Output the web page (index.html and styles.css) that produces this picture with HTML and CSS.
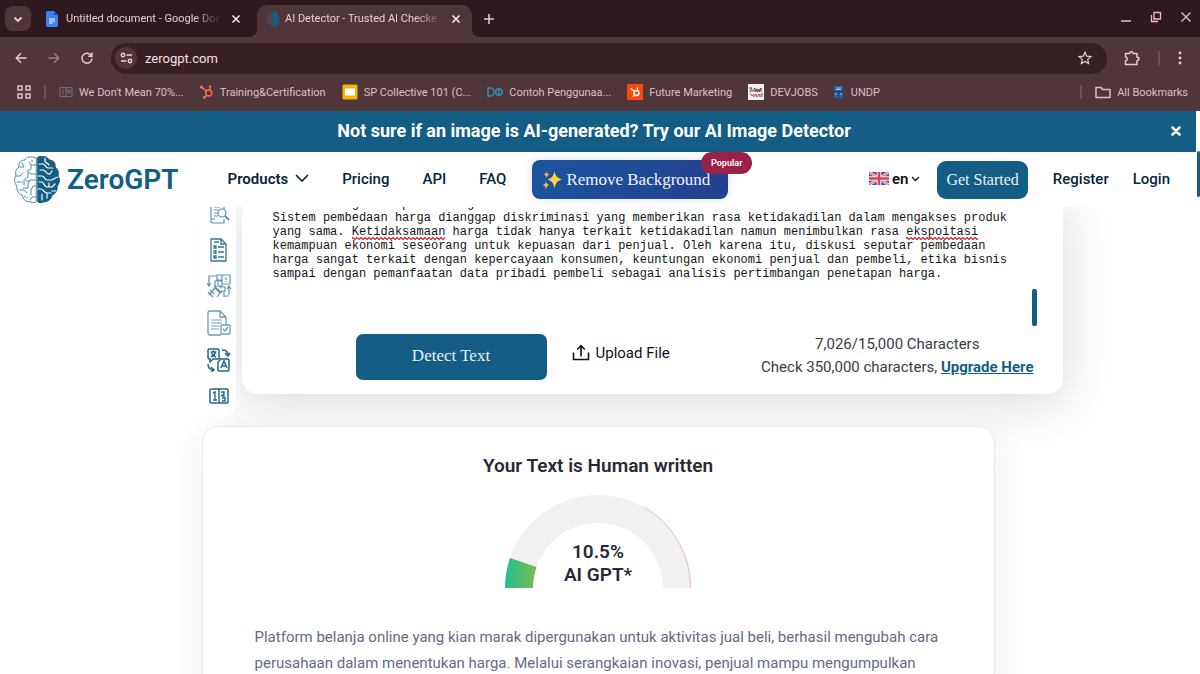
FILE: index.html
```html
<!DOCTYPE html>
<html lang="en">
<head>
<meta charset="utf-8">
<meta name="viewport" content="width=device-width, initial-scale=1">
<title>AI Detector - Trusted AI Checker</title>
<link rel="stylesheet" href="styles.css">
</head>
<body>
<div class="browser">
  <div class="tabstrip">
    <button class="tab-search" aria-label="Search tabs"><svg width="10" height="10" viewBox="0 0 10 10"><path d="M1.500 3.500 5 7l3.500-3.500" fill="none" stroke="currentColor" stroke-width="1.800"/></svg></button>
    <div class="tab">
      <svg width="12" height="16" viewBox="0 0 12 16"><path d="M1.500 0H8l4 4v10.500a1.500 1.500 0 0 1-1.500 1.500h-9A1.500 1.500 0 0 1 0 14.500v-13A1.500 1.500 0 0 1 1.500 0Z" fill="#3b82f6"/><path d="M8 0v4h4Z" fill="#1552c4"/><path d="M3 8h6M3 10h6M3 12h4" stroke="#fff" stroke-width="1"/></svg>
      <span class="tab-title">Untitled document - Google Doc</span>
      <button class="tab-close" aria-label="Close tab"><svg width="10" height="10" viewBox="0 0 10 10"><path d="m1.500 1.500 7 7m0-7-7 7" stroke="currentColor" stroke-width="1.500"/></svg></button>
    </div>
    <div class="tab tab-active">
      <svg width="13" height="16" viewBox="0 0 13 16"><path d="M6 1a5.500 7 0 0 0 0 14" fill="#4e4254"/><path d="M6.500 0a6.500 8 0 0 1 0 16Z" fill="#145d84"/></svg>
      <span class="tab-title">AI Detector - Trusted AI Checke</span>
      <button class="tab-close" aria-label="Close tab"><svg width="10" height="10" viewBox="0 0 10 10"><path d="m1.500 1.500 7 7m0-7-7 7" stroke="currentColor" stroke-width="1.700"/></svg></button>
    </div>
    <button class="icon-btn new-tab" aria-label="New tab"><svg width="12" height="12" viewBox="0 0 12 12"><path d="M6 1v10M1 6h10" stroke="currentColor" stroke-width="1.500"/></svg></button>
    <div class="window-controls">
      <button class="icon-btn" aria-label="Minimize"><svg width="12" height="12" viewBox="0 0 12 12"><path d="M1 10h10" stroke="currentColor" stroke-width="1.500"/></svg></button>
      <button class="icon-btn" aria-label="Restore"><svg width="12" height="12" viewBox="0 0 12 12" fill="none" stroke="currentColor" stroke-width="1.300"><path d="M4 1.500h6.500V8H4ZM1.500 4v6.500H8"/></svg></button>
      <button class="icon-btn" aria-label="Close"><svg width="12" height="12" viewBox="0 0 12 12"><path d="m1.500 1.500 9 9m0-9-9 9" stroke="currentColor" stroke-width="1.300"/></svg></button>
    </div>
  </div>
  <div class="toolbar">
    <div class="history">
      <button class="icon-btn" aria-label="Back"><svg width="12" height="12" viewBox="0 0 12 12" fill="none" stroke="currentColor" stroke-width="1.400"><path d="M11.500 6H1.500M6 1.200 1.200 6 6 10.800"/></svg></button>
      <button class="icon-btn dim" aria-label="Forward"><svg width="12" height="12" viewBox="0 0 12 12" fill="none" stroke="currentColor" stroke-width="1.400"><path d="M.5 6h10M6 1.200 10.800 6 6 10.800"/></svg></button>
      <button class="icon-btn" aria-label="Reload"><svg width="12" height="12" viewBox="0 0 12 12" fill="none" stroke="currentColor" stroke-width="1.500"><path d="M10.300 3.600A5 5 0 1 0 11 6.500M10.900.5v3.700H7.200"/></svg></button>
    </div>
    <div class="omnibox">
      <button class="site-info" aria-label="View site information"><svg width="13" height="12" viewBox="0 0 13 12" fill="none" stroke="currentColor" stroke-width="1.400"><circle cx="3" cy="3" r="1.700"/><path d="M6.500 3H12M1 9h5.500"/><circle cx="10" cy="9" r="1.700"/></svg></button>
      <input class="url" type="text" value="zerogpt.com" aria-label="Address">
      <button class="icon-btn" aria-label="Bookmark this page"><svg width="14" height="14" viewBox="0 0 14 14"><path d="m7 1.300 1.700 3.900 4.300.4-3.300 2.800 1 4.200L7 10.400l-3.700 2.200 1-4.200L1 5.600l4.300-.4Z" fill="none" stroke="currentColor" stroke-width="1.200"/></svg></button>
    </div>
    <div class="tools">
      <button class="icon-btn" aria-label="Extensions"><svg width="16" height="16" viewBox="0 0 16 16"><path d="M1.500 3.500h4.300c0-2.300 3.200-2.300 3.200 0h4v3.700c2.600 0 2.600 3.200 0 3.200v4H1.500v-3.700c2.300-.3 2.300-3.300 0-3.600Z" fill="none" stroke="currentColor" stroke-width="1.500" stroke-linejoin="round"/></svg></button>
      <span class="divider"></span>
      <button class="icon-btn" aria-label="Menu"><svg width="4" height="14" viewBox="0 0 4 14" fill="currentColor"><circle cx="2" cy="2" r="1.400"/><circle cx="2" cy="7" r="1.400"/><circle cx="2" cy="12" r="1.400"/></svg></button>
    </div>
  </div>
  <nav class="bookmarks" aria-label="Bookmarks">
    <button class="icon-btn apps" aria-label="Apps"><svg width="14" height="14" viewBox="0 0 14 14" fill="none" stroke="currentColor" stroke-width="1.500"><path d="M1 1h4v4H1ZM9 1h4v4H9ZM1 9h4v4H1ZM9 9h4v4H9Z"/></svg></button>
    <span class="divider"></span>
    <a href="#"><svg width="14" height="12" viewBox="0 0 14 12" fill="none" stroke="#7b6670" stroke-width="1.200"><path d="M1 1.500h5l1 .7 1-.7h5v9H8l-1 .7-1-.7H1ZM7 2v9M3 4h2M3 6h2M3 8h2M9 4h2v3H9Z"/></svg>We Don't Mean 70%...</a>
    <a href="#"><svg width="14" height="14" viewBox="0 0 14 14" fill="none" stroke="#f5704f" stroke-width="1.500"><circle cx="8.700" cy="8" r="3"/><path d="M10 5V1.500M6.400 6 1.500 2.200M6.500 10.200 4.500 12.500"/><g fill="#f5704f"><circle cx="10" cy="1.500" r=".6"/><circle cx="1.500" cy="2" r=".8"/><circle cx="4.200" cy="12.500" r=".6"/></g></svg>Training&amp;Certification</a>
    <a href="#"><svg width="16" height="16" viewBox="0 0 16 16"><rect x=".5" y=".5" width="15" height="15" rx="1.500" fill="#f4b400"/><path d="M3 4.500h10v7H3Z" fill="#fff"/></svg>SP Collective 101 (C...</a>
    <a href="#"><svg width="16" height="10" viewBox="0 0 16 10" fill="none" stroke="#348ca5" stroke-width="1.500"><path d="M1 1h2.500a3.500 4 0 0 1 0 8H1Z"/><circle cx="11.800" cy="5" r="3.200"/><path d="M11.800 1v8"/></svg>Contoh Penggunaa...</a>
    <a href="#"><svg width="16" height="16" viewBox="0 0 16 16"><path d="M0 0h16v16H0Z" fill="#fb470e"/><g fill="none" stroke="#fff" stroke-width="1.400"><circle cx="9.500" cy="9" r="2.500"/><path d="M10.500 6.500v-3M7.500 7.500l-4-3.200M7.500 11 6 12.800"/></g></svg>Future Marketing</a>
    <a href="#"><svg width="16" height="16" viewBox="0 0 16 16"><path d="M0 0h16v16H0Z" fill="#f4eeee"/><path d="M1 4h3l-2 3h3l2-3v4l2-3v3l2-3v3l2-4v4" fill="none" stroke="#49494a"/><path d="m2 9 2 3 2-2v3l2-3 1 3 2-3 1 3 2-4v4" fill="none" stroke="#c65259"/></svg>DEVJOBS</a>
    <a href="#"><svg width="11" height="12" viewBox="0 0 11 12"><path d="M0 0h9v5H0ZM0 6h4v6H0ZM5 6h4v6H5Z" fill="#1764ad"/><path d="M2 2h5M2 3.500h5M1 8h2M6 8h2" stroke="#9bc5e8"/></svg>UNDP</a>
    <div class="all-bookmarks"><span class="divider"></span><a href="#"><svg width="16" height="13" viewBox="0 0 16 13"><path d="M1 1.500h5l1.500 2H15v8H1Z" fill="none" stroke="currentColor" stroke-width="1.500" stroke-linejoin="round"/></svg>All Bookmarks</a></div>
  </nav>
</div>
<div class="viewport">
  <div class="site">
    <div class="promo">
      <a href="#">Not sure if an image is AI-generated? Try our AI Image Detector</a>
      <button class="promo-close" aria-label="Dismiss"><svg width="10" height="10" viewBox="0 0 10 10"><path d="m1.500 1.500 7 7m0-7-7 7" stroke="#fff" stroke-width="2.500" stroke-linecap="round"/></svg></button>
    </div>
    <header class="header">
      <a class="brand" href="#">
        <svg width="46" height="48" viewBox="0 0 46 48" fill="none" stroke-linecap="round" stroke-linejoin="round">
          <path d="M22 2C17-.5 12 1 11 4 7 4 4 7 5 11c-3 2-4 5-3 8-2 4-2 8 1 11-1 5 2 8 5 9 1 5 5 7 9 7 2 1 4 1 5 0Z" stroke="#4787a5"/>
          <path d="M22 9h-5l-2-3M17 9v4l-4 2M8 7l2 4H6M22 18h-5l-3-2M14 16v5l-4 3v5M2 20h4l3-3M3 26h5M22 24h-6l-2 4v4h-5M22 30h-3l-2 4v5M5 34h5l3 3M22 41h-4l-2 3M10 40l3 2M12 25h4M18 4v2" stroke="#578fab" stroke-width="1"/>
          <path d="M24 1c5-2 10 0 11 3 4 0 7 3 6 7 3 2 4 5 3 8 2 4 2 8-1 11 1 5-2 8-5 9-1 5-5 7-9 7-2 1-4 1-5 0Z" fill="#145d84" stroke="#145d84"/>
          <path d="M25 8h4c3 0 2 4 5 4h5M31 2v3c0 2 3 2 4 4M26 14h3c3 0 3 5 7 4l2-3M24 20h4c3 0 2 4 5 4h4c3 0 4-3 7-3M25 26h3c2 0 2 5 5 5h5l3-3M24 33h3c2 0 3 4 6 4h4M33 37v5M28 38v6M35 27v4M42 35h-4" stroke="#fff" stroke-width="1.200"/>
        </svg>
        <span>ZeroGPT</span>
      </a>
      <nav class="menu" aria-label="Main">
        <button class="menu-drop">Products <svg width="14" height="9" viewBox="0 0 14 9"><path d="m1.500 1.500 5.500 5.500 5.500-5.500" fill="none" stroke="currentColor" stroke-width="1.700" stroke-linecap="round"/></svg></button>
        <a href="#">Pricing</a>
        <a href="#">API</a>
        <a href="#">FAQ</a>
      </nav>
      <a class="remove-bg" href="#">
        <svg width="20" height="20" viewBox="0 0 20 20"><path d="M12.500 1c.8 4.500 2.300 6.800 7.300 8.500-5 1.700-6.500 4.200-7.300 9.300-.8-5.100-2.300-7.600-6.800-9.300C10.200 7.800 11.700 5.500 12.500 1Z" fill="#fdd03e"/><path d="M4.500 1c.4 2.400 1.200 3.200 3.200 3.600-2 .5-2.800 1.300-3.200 3.600-.4-2.300-1.200-3.100-3-3.600 1.800-.4 2.600-1.200 3-3.600ZM4 11c.5 2.800 1.300 3.500 3.500 4-2.200.5-3 1.700-3.500 4.500C3.500 16.700 2.700 15.500.5 15c2.200-.5 3-1.200 3.500-4Z" fill="#f3b445"/></svg>
        Remove Background<span class="popular">Popular</span>
      </a>
      <div class="account">
        <button class="lang"><svg width="20" height="13" viewBox="0 0 20 13"><path d="M0 0h20v13H0Z" fill="#465b9e"/><path d="m0 0 20 13M20 0 0 13" stroke="#f5e9ef" stroke-width="2.600"/><path d="m0 0 20 13M20 0 0 13" stroke="#e24e62" stroke-width="1"/><path d="M10 0v13M0 6.500h20" stroke="#f5e9ef" stroke-width="4.500"/><path d="M10 0v13M0 6.500h20" stroke="#df4058" stroke-width="2.500"/></svg><span>en</span><svg width="9" height="6" viewBox="0 0 9 6"><path d="m1 1 3.500 3.500L8 1" fill="none" stroke="currentColor" stroke-width="1.300"/></svg></button>
        <a class="get-started" href="#">Get Started</a>
        <a class="account-link" href="#">Register</a>
        <a class="account-link" href="#">Login</a>
      </div>
    </header>
    <main class="main">
      <section class="workspace">
        <nav class="rail" aria-label="Tools">
          <a href="#" aria-label="Plagiarism checker"><svg width="24" height="24" viewBox="0 0 24 24" fill="none" stroke="#5e91ad" stroke-width="1.200"><path d="M4 1h13v6M17 17v4H6c-3 0-3-4 0-4h2M4 1v16M7 5h6M7 8h4M7 11h4M7 14h4"/><circle cx="15" cy="11" r="4"/><path d="m18 14 4 4" stroke-width="2"/></svg></a>
          <a href="#" aria-label="Summarizer"><svg width="24" height="24" viewBox="0 0 24 24" fill="none" stroke="#347798" stroke-width="1.300"><path d="M4 1h10l5 5v17H4ZM14 1v5h5M7 8h2v2H7ZM7 13h2v2H7ZM7 18h2v2H7ZM11 9h6M11 14h6M11 19h6M7 4h5"/></svg></a>
          <a href="#" aria-label="Paraphraser"><svg width="24" height="24" viewBox="0 0 24 24" fill="none" stroke="#5f93af" stroke-width="1.200"><path d="M10 1h5v5h-5ZM15 1h8v9h-8ZM19 3v3M19 7v1M9 2H2v9M0 9l2 3 2-3M8 7h7v5H8ZM11 8v3M22 21V12M20 15l2-3 2 3M17 22h5M7 12l8 7M2 21l6-7 5 5-3 4M1 18l5 5M12 13h6v4h-4M17 17v6M3 16l4 4"/></svg></a>
          <a href="#" aria-label="Grammar checker"><svg width="24" height="26" viewBox="0 0 24 26" fill="none" stroke="#6e9ab6" stroke-width="1.300"><path d="M14 25H3c-1.500 0-2-.5-2-2V3c0-1.500.5-2 2-2h10l6 6v8M13 1v6h6"/><path d="M4 10h11M4 13h11M4 16h9M4 19h8" stroke="#a9bfce"/><rect x="14" y="15" width="9" height="9" rx="1"/><path d="m16 19 2 2 3-4"/></svg></a>
          <a href="#" aria-label="Translator"><svg width="24" height="24" viewBox="0 0 24 24" fill="none" stroke="#22678b" stroke-width="1.500"><path d="M2 1h9l1 1v8l-1 1H6l-3 3v-3H2l-1-1V2ZM13 11h8l1 1v10l-1 1h-9l-1-1v-8l2-2ZM3.500 4h6M6.500 2.500V4M8.500 4c-.5 2-2.500 4-4.500 5M4.500 5c1 2 2.500 3 4.500 4M14 20l3-7 3 7M15 18h4M15 2c4 0 6 2 6 5M18 5l3 3 2-3M1 16c0 4 2 6 6 6M4 19l3 3-3 2"/></svg></a>
          <a href="#" aria-label="Word counter"><svg width="24" height="24" viewBox="-2 -3 24 24" fill="none" stroke="#22678b" stroke-width="1.500"><rect x="1" y="2" width="18" height="14" rx="1"/><path d="M10 2v14M4 6l2-1v8M4 13h4M12 5h3v2l-3 2M16 9h-3M13 11h3v3h-3" stroke-width="1.400"/></svg></a>
        </nav>
        <form class="editor">
          <div class="editor-body">
            <textarea class="editor-text" rows="8" wrap="off" spellcheck="false" aria-label="Text to check">di atas uang kelompok dukung
Sistem pembedaan harga dianggap diskriminasi yang memberikan rasa ketidakadilan dalam mengakses produk
yang sama. Ketidaksamaan harga tidak hanya terkait ketidakadilan namun menimbulkan rasa ekspoitasi
kemampuan ekonomi seseorang untuk kepuasan dari penjual. Oleh karena itu, diskusi seputar pembedaan
harga sangat terkait dengan kepercayaan konsumen, keuntungan ekonomi penjual dan pembeli, etika bisnis
sampai dengan pemanfaatan data pribadi pembeli sebagai analisis pertimbangan penetapan harga.</textarea>
            <span class="squiggle squiggle-first"></span>
            <span class="squiggle squiggle-second"></span>
            <span class="editor-thumb"></span>
          </div>
          <div class="editor-actions">
            <button class="detect" type="button">Detect Text</button>
            <button class="upload" type="button"><svg width="18" height="18" viewBox="0 0 18 18" fill="none" stroke="currentColor" stroke-width="1.600"><path d="M1.500 8.500v7h15v-7M9 12.500V2M5.200 5.500 9 1.700l3.800 3.800"/></svg>Upload File</button>
            <p class="quota"><span>7,026/15,000 Characters</span><span>Check 350,000 characters, <a href="#">Upgrade Here</a></span></p>
          </div>
        </form>
      </section>
      <section class="result">
        <h1>Your Text is Human written</h1>
        <div class="gauge">
          <svg width="186" height="93" viewBox="0 0 186 93">
            <defs><linearGradient id="score" x1="0" y1="0" x2="1" y2="0"><stop offset="0" stop-color="#21bf91"/><stop offset="1" stop-color="#7cbb4c"/></linearGradient></defs>
            <path d="M0 93a93 93 0 0 1 186 0h-28a65 65 0 0 0-130 0Z" fill="#f1f1f2"/>
            <path d="M139 12a93 93 0 0 1 46.500 81" fill="none" stroke="#edbbb4" stroke-width="1"/>
            <path d="M0 93A93 93 0 0 1 5 63l26.500 9A65 65 0 0 0 28 93Z" fill="url(#score)"/>
          </svg>
          <p class="score">10.5%<br>AI GPT*</p>
        </div>
        <p class="analysed">Platform belanja online yang kian marak dipergunakan untuk aktivitas jual beli, berhasil mengubah cara perusahaan dalam menentukan harga. Melalui serangkaian inovasi, penjual mampu mengumpulkan</p>
      </section>
    </main>
  </div>
  <div class="scrollbar"><span class="scroll-thumb"></span></div>
</div>
</body>
</html>
```
FILE: styles.css
```css
* { box-sizing: border-box; }
body {
  margin: 0;
  height: 100vh;
  display: flex;
  flex-direction: column;
  overflow: hidden;
  background: #fff;
  color: #05263a;
  font-family: Roboto, "Liberation Sans", sans-serif;
}
button, input, textarea { font: inherit; color: inherit; border: 0; padding: 0; margin: 0; background: none; outline: 0; }
button { cursor: pointer; }
a { color: inherit; text-decoration: none; }
svg { display: block; flex: none; }
p, h1 { margin: 0; }

/* Browser frame */
.browser { flex: none; background: #50353a; color: #e9cbd1; font-size: 11px; }
.tabstrip { display: flex; height: 37px; background: #2f191e; }
.tab-search { width: 26px; height: 25px; margin: 6px 10px 0 5px; border-radius: 8px; background: #50353a; display: grid; place-items: center; }
.tab { width: 216px; padding: 0 14px 0 5px; display: flex; align-items: center; gap: 8px; }
.tab-active {
  width: 215px;
  margin-top: 5px;
  padding: 0 9px 5px 9px;
  gap: 6px;
  position: relative;
  border-radius: 10px 10px 0 0;
  background: #50353a;
}
.tab-active::before, .tab-active::after { content: ""; position: absolute; bottom: 0; width: 8px; height: 8px; }
.tab-active::before { right: 100%; background: radial-gradient(circle at 0 0, transparent 8px, #50353a 8px); }
.tab-active::after { left: 100%; background: radial-gradient(circle at 100% 0, transparent 8px, #50353a 8px); }
.tab-title { flex: 1; white-space: nowrap; mask-image: linear-gradient(to right, #000 82%, transparent); }
.tab-close { flex: none; width: 14px; height: 14px; display: grid; place-items: center; color: #fbe7ea; }
.icon-btn { display: grid; place-items: center; }
.new-tab { margin-left: 11px; }
.window-controls { margin-left: auto; padding: 0 8px 4px 0; display: flex; gap: 18px; align-items: center; color: #f5b8c3; }
.toolbar { height: 42px; padding: 0 18px 0 15px; display: flex; align-items: center; }
.history { display: flex; gap: 21px; margin-right: 18px; }
.dim { opacity: .5; }
.omnibox { flex: 1; height: 31px; padding: 0 15px 0 4px; border-radius: 16px; background: #381f23; display: flex; align-items: center; gap: 8px; }
.site-info { width: 22px; height: 22px; border-radius: 50%; background: #50353a; display: grid; place-items: center; }
.url { flex: 1; min-width: 0; font-size: 13px; color: #f6e1e4; }
.tools { display: flex; align-items: center; gap: 18px; margin-left: 17px; }
.divider { width: 2px; height: 14px; background: #705057; }
.bookmarks { height: 32px; padding: 0 12px 6px 17px; display: flex; align-items: center; color: #dfc0c6; white-space: nowrap; }
.bookmarks a { display: flex; align-items: center; gap: 6px; margin-right: 16px; }
.bookmarks .divider { margin: 0 13px; }
.bookmarks .all-bookmarks { margin-left: auto; display: flex; align-items: center; }
.bookmarks .all-bookmarks a { margin-right: 0; }

/* Page frame */
.viewport { flex: 1; min-height: 0; display: flex; }
.site { flex: 1; min-width: 0; overflow: hidden; }
.scrollbar { width: 4px; padding: 40px 0 0 1px; }
.scroll-thumb { display: block; height: 46px; border-radius: 2px; background: #145d84; }
.promo { height: 41px; padding: 0 14px 2px 18px; display: flex; align-items: center; background: #145d84; color: #fff; font-size: 18px; font-weight: 700; }
.promo a { flex: 1; text-align: center; }
.promo-close { width: 12px; height: 12px; display: grid; place-items: center; }
.header { position: relative; z-index: 2; height: 55px; padding: 0 26px 0 14px; display: flex; align-items: center; background: #fff; font-size: 15px; font-weight: 500; white-space: nowrap; }
.brand { display: flex; align-items: center; gap: 7px; color: #145d84; font-size: 28px; font-weight: 600; }
.menu { display: flex; gap: 33px; margin-left: 49px; padding-bottom: 2px; }
.menu-drop { display: flex; align-items: center; gap: 7px; font-weight: 600; }
.remove-bg {
  position: relative;
  height: 39px;
  margin-left: 26px;
  padding: 0 14px 0 10px;
  display: flex;
  align-items: center;
  gap: 4px;
  border-radius: 8px;
  background: linear-gradient(120deg, #1b559e, #243f8e);
  box-shadow: 0 0 12px rgba(80, 120, 190, .2);
  color: #eef3ff;
  font: 17px "Liberation Serif", serif;
}
.popular { position: absolute; top: -8px; right: -24px; padding: 5px 10px; border-radius: 11px; background: #9b2148; color: #fff; font: 600 9px/12px Roboto, sans-serif; }
.account { margin-left: auto; display: flex; align-items: center; }
.lang { display: flex; align-items: center; gap: 3px; margin-right: 17px; padding-bottom: 2px; color: #111; font-weight: 600; }
.get-started { height: 38px; padding: 0 9px; margin-right: 1px; border-radius: 9px; background: #145d84; color: #e8f1f7; font: 16px/38px "Liberation Serif", serif; }
.account-link { margin-left: 24px; padding-bottom: 2px; }

/* Content */
.main { display: grid; grid-template-columns: 1fr minmax(0, 793px) 1fr; row-gap: 10px; margin-top: -11px; }
.workspace { grid-column: 2 / 4; max-width: 861px; display: flex; gap: 6px; align-items: flex-start; }
.rail { position: relative; z-index: 1; flex: none; width: 34px; padding: 6px 0 8px; display: flex; flex-direction: column; align-items: center; gap: 12px; border-radius: 0 0 12px 12px; background: #fff; }
.editor { flex: 1; min-width: 0; padding: 1px 24px 13px 31px; border-radius: 0 0 16px 16px; background: #fff; box-shadow: 0 8px 50px rgba(35, 42, 80, .18); }
.editor-body { position: relative; font: 12px/14px "Liberation Mono", monospace; color: #151515; }
.editor-text { display: block; width: 100%; height: 129px; resize: none; overflow: hidden; }
.squiggle { position: absolute; top: 40px; height: 3px; background: linear-gradient(45deg, transparent 40%, #e5484f 40% 65%, transparent 65%) 0 0 / 4px 3px, linear-gradient(-45deg, transparent 40%, #e5484f 40% 65%, transparent 65%) 2px 0 / 4px 3px; }
.squiggle-first { left: 11ch; width: 13ch; }
.squiggle-second { left: 88ch; width: 10ch; }
.editor-thumb { position: absolute; right: 2px; bottom: 0; width: 5px; height: 37px; border-radius: 2px; background: #145d84; }
.editor-actions { display: flex; align-items: center; padding: 7px 5px 0 83px; }
.detect { width: 191px; height: 46px; padding-bottom: 2px; border-radius: 7px; background: #145d84; color: #e8f1f7; font: 17px "Liberation Serif", serif; }
.upload { display: flex; align-items: center; gap: 6px; margin: 0 auto 8px 25px; color: #111; font-size: 15px; }
.quota { display: flex; flex-direction: column; align-items: center; padding-bottom: 2px; color: #3a3c44; font-size: 15px; line-height: 23px; }
.quota a { color: #145d84; font-weight: 700; text-decoration: underline; }
.result { position: relative; grid-column: 2; padding: 26px 52px; border: 1px solid #e8e9ef; border-radius: 16px; background: #fff; box-shadow: 0 8px 36px rgba(35, 42, 80, .08); color: #292a35; text-align: center; }
.result h1 { font-size: 19px; line-height: 26px; font-weight: 600; }
.gauge { display: grid; justify-items: center; margin-top: 16px; }
.gauge svg, .score { grid-area: 1 / 1; }
.score { align-self: end; font-size: 19px; line-height: 23px; font-weight: 600; padding-bottom: 2px; }
.analysed { margin-top: 36px; color: #656a80; font-size: 15px; line-height: 26px; text-align: left; }
```
